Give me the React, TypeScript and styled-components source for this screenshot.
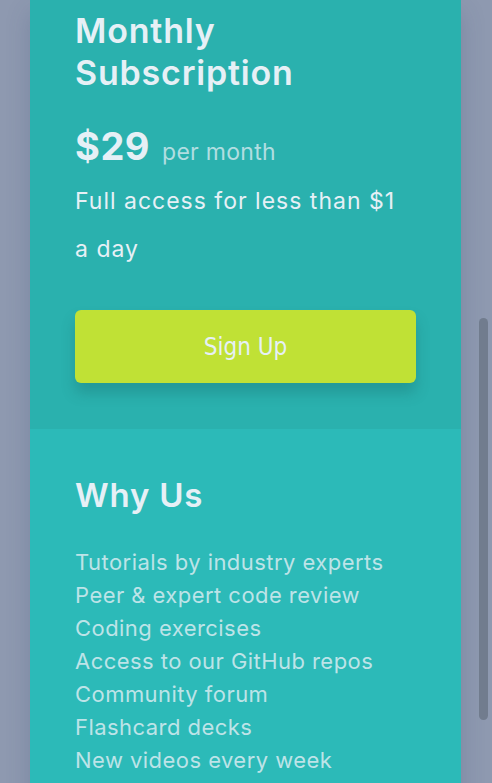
import React from 'react';
import styled, { createGlobalStyle } from 'styled-components';

const GlobalStyle = createGlobalStyle`
  html, body {
    margin: 0;
    height: 100%;
    overflow: hidden;
  }
  body {
    background: #8e99b0;
    font-family: Inter, "Open Sans", sans-serif;
  }
  * { box-sizing: border-box; }
`;

const Page = styled.main`
  padding: 0 0 80px 30px;
`;

const Card = styled.div`
  width: 431px;
  border-radius: 0 0 8px 8px;
  overflow: hidden;
  box-shadow: 0 12px 24px rgba(48, 70, 110, 0.22);
`;

const Section = styled.section<{ $bg: string; $top: number; $bottom: number }>`
  background: ${p => p.$bg};
  padding: ${p => p.$top}px 45px ${p => p.$bottom}px;
  color: #e6f0f6;
`;

const Heading = styled.h2<{ $size: number }>`
  margin: 0;
  font-size: ${p => p.$size}px;
  line-height: 42px;
  font-weight: 600;
  letter-spacing: 0.8px;
`;

const PriceRow = styled.div`
  margin-top: 29px;
  font-size: 38px;
  line-height: 46px;
`;

const Price = styled.span`
  font-weight: 700;
  letter-spacing: 0.5px;
`;

const Period = styled.span`
  margin-left: 12px;
  font-size: 23px;
  color: rgba(230, 240, 246, 0.72);
  letter-spacing: 0.3px;
`;

const Note = styled.p`
  max-width: 336px;
  margin: 2px 0 0;
  font-size: 23px;
  line-height: 48px;
  letter-spacing: 1px;
`;

const SignUp = styled.button`
  display: block;
  width: 100%;
  height: 73px;
  margin-top: 37px;
  border: none;
  border-radius: 6px;
  background: #c0e135;
  color: #e6f0f6;
  font-family: "DejaVu Sans Condensed", "DejaVu Sans", sans-serif;
  font-size: 24px;
  box-shadow: 0 10px 14px rgba(20, 90, 90, 0.28);
  cursor: pointer;
`;

const List = styled.ul`
  list-style: none;
  margin: 30px 0 0;
  padding: 0;
`;

const Item = styled.li`
  font-size: 22px;
  line-height: 33px;
  letter-spacing: 0.45px;
  color: rgba(230, 240, 246, 0.78);
`;

/* browser scrollbar thumb, drawn over the page */
const ScrollThumb = styled.div`
  position: fixed;
  top: 318px;
  right: 4px;
  width: 9px;
  height: 402px;
  border-radius: 5px;
  background: #717c8e;
`;

const perks = [
  'Tutorials by industry experts',
  'Peer & expert code review',
  'Coding exercises',
  'Access to our GitHub repos',
  'Community forum',
  'Flashcard decks',
  'New videos every week',
];

export default function App() {
  return (
    <>
      <GlobalStyle />
      <Page>
        <Card>
          <Section $bg="#2ab1ae" $top={10} $bottom={46}>
            <Heading $size={34}>Monthly Subscription</Heading>
            <PriceRow>
              <Price>$29</Price>
              <Period>per month</Period>
            </PriceRow>
            <Note>Full access for less than $1 a day</Note>
            <SignUp>Sign Up</SignUp>
          </Section>
          <Section $bg="#2cbab8" $top={45} $bottom={45}>
            <Heading $size={33}>Why Us</Heading>
            <List>
              {perks.map(p => (
                <Item key={p}>{p}</Item>
              ))}
            </List>
          </Section>
        </Card>
      </Page>
      <ScrollThumb />
    </>
  );
}
